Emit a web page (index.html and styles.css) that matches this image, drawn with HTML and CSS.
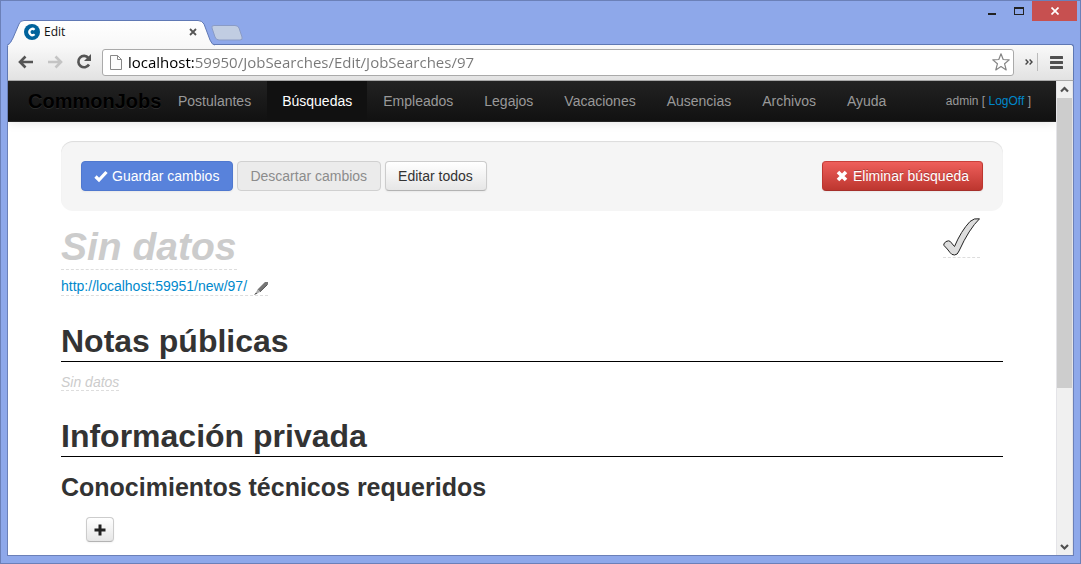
FILE: index.html
```html
<!DOCTYPE html>
<html lang="es">
<head>
<meta charset="utf-8">
<title>Edit</title>
<link rel="stylesheet" href="styles.css">
</head>
<body>
<div class="window">
  <header class="titlebar">
    <div class="tab">
      <svg class="tab-shape" width="208" height="26" viewBox="0 0 208 26" aria-hidden="true">
        <defs><linearGradient id="tabFill" x1="0" y1="0" x2="0" y2="1"><stop offset="0" stop-color="#fff"/><stop offset="1" stop-color="#f8f8f8"/></linearGradient></defs>
        <path d="M0 26 Q4 24 6 18 L12 4 Q13 .5 17 .5 H191 Q195 .5 197 4 L203 20 Q205 25 208 25 V26 Z" fill="url(#tabFill)"/>
        <path d="M0 25.5 Q4 23 6 18 L12 4 Q13 .5 17 .5 H191 Q195 .5 197 4 L203 20 Q205 25 208 25" fill="none" stroke="#6079b5"/>
      </svg>
      <svg class="favicon" width="16" height="16" viewBox="0 0 16 16" aria-hidden="true">
        <circle cx="8" cy="8" r="8" fill="#00639c"/>
        <path d="M10.6 5.7 A3.1 3.1 0 1 0 10.6 10.3" fill="none" stroke="#fff" stroke-width="2.2"/>
      </svg>
      <span class="tab-title">Edit</span>
      <button class="tab-close" aria-label="Cerrar pestaña"><svg width="8" height="8" viewBox="0 0 8 8"><path d="M1 1 L7 7 M7 1 L1 7" stroke="#555" stroke-width="1.8"/></svg></button>
    </div>
    <button class="new-tab" aria-label="Nueva pestaña"><svg width="32" height="16" viewBox="0 0 32 16"><path d="M3 .5 H24 Q27 .5 28 3 L31 12 Q32 15 29 15 H8 Q5 15 4 12 L1 3 Q0 .5 3 .5Z" fill="#c1cde2" stroke="#8a9bc6"/></svg></button>
    <div class="window-controls">
      <button class="win-button" aria-label="Minimizar"><svg width="8" height="12" viewBox="0 0 8 12"><path d="M0 9 H8" stroke="#222" stroke-width="2"/></svg></button>
      <button class="win-button" aria-label="Maximizar"><svg width="10" height="8" viewBox="0 0 10 8"><path d="M.5 0 V8 M9.500 0 V8 M0 7.500 H10" stroke="#222"/><path d="M0 1 H10" stroke="#222" stroke-width="2"/></svg></button>
      <button class="win-button win-close" aria-label="Cerrar"><svg width="8" height="8" viewBox="0 0 8 8"><path d="M.5 .5 L7.500 7.500 M7.500 .5 L.5 7.500" stroke="#fff" stroke-width="1.7"/></svg></button>
    </div>
  </header>

  <div class="toolbar">
    <button class="tool" aria-label="Atrás"><svg width="16" height="14" viewBox="0 0 16 14"><path d="M15 7 H3 M7.500 1.500 L2 7 L7.500 12.500" fill="none" stroke="#555" stroke-width="2.600"/></svg></button>
    <button class="tool" aria-label="Adelante"><svg width="16" height="14" viewBox="0 0 16 14"><path d="M1 7 H13 M8.500 1.500 L14 7 L8.500 12.500" fill="none" stroke="#c4c4c4" stroke-width="2.600"/></svg></button>
    <button class="tool" aria-label="Recargar"><svg width="16" height="16" viewBox="0 0 16 16"><path d="M12.500 4 A5.700 5.700 0 1 0 13 10.500" fill="none" stroke="#555" stroke-width="2.600"/><path d="M15 0 V7 H8Z" fill="#555"/></svg></button>
    <form class="address">
      <svg width="12" height="15" viewBox="0 0 12 15" aria-hidden="true"><path d="M.5 .5 H7.500 L11.500 4.500 V14.500 H.5Z M7.500 .5 V4.500 H11.500" fill="#fcfcfc" stroke="#888"/></svg>
      <input class="address-input" type="text" aria-label="Dirección" value="localhost:59950/JobSearches/Edit/JobSearches/97">
      <button class="star" type="button" aria-label="Marcador"><svg width="18" height="18" viewBox="0 0 18 18"><path d="M9 .8 L11.200 6.500 L17.200 6.900 L12.600 10.800 L14.200 16.900 L9 13.500 L3.800 16.900 L5.400 10.800 L.8 6.900 L6.800 6.500Z" fill="#fff" stroke="#858585" stroke-width="1.200" stroke-linejoin="round"/></svg></button>
    </form>
    <button class="overflow" aria-label="Más extensiones"><svg width="8" height="6" viewBox="0 0 8 6"><path d="M.6 .5 L3 3 L.6 5.500 M4.600 .5 L7 3 L4.600 5.500" fill="none" stroke="#444" stroke-width="1.400"/></svg></button>
    <button class="menu" aria-label="Menú"><svg width="13" height="13" viewBox="0 0 13 13"><path d="M1 1.500 H12 M1 6.500 H12 M1 11.500 H12" stroke="#505050" stroke-width="3" stroke-linecap="round"/></svg></button>
  </div>

  <div class="viewport">
    <div class="page">
      <nav class="navbar">
        <a class="brand" href="#">CommonJobs</a>
        <ul class="nav">
          <li><a href="#">Postulantes</a></li>
          <li><a class="active" href="#">Búsquedas</a></li>
          <li><a href="#">Empleados</a></li>
          <li><a href="#">Legajos</a></li>
          <li><a href="#">Vacaciones</a></li>
          <li><a href="#">Ausencias</a></li>
          <li><a href="#">Archivos</a></li>
          <li><a href="#">Ayuda</a></li>
        </ul>
        <p class="session">admin [ <a href="#">LogOff</a> ]</p>
      </nav>

      <main class="content">
        <div class="actions">
          <button class="btn btn-primary"><svg width="14" height="14" viewBox="0 0 14 14" aria-hidden="true"><path d="M1.500 7.500 L5 11 L12.500 3" fill="none" stroke="#fff" stroke-width="3.200"/></svg>Guardar cambios</button>
          <button class="btn btn-disabled" disabled>Descartar cambios</button>
          <button class="btn">Editar todos</button>
          <button class="btn btn-danger"><svg width="14" height="14" viewBox="0 0 14 14" aria-hidden="true"><path d="M3 3 L11 11 M11 3 L3 11" stroke="#fff" stroke-width="3.600"/></svg>Eliminar búsqueda</button>
        </div>

        <div class="heading">
          <h1><span class="editable">Sin datos</span></h1>
          <button class="approve" aria-label="Publicada"><svg width="37" height="38" viewBox="0 0 37 38"><path d="M.8 26 Q2.500 22.800 5.500 22.800 Q7.500 23 8.500 25 L11.500 28.500 Q18 13 27 3.500 Q31 -.2 36.500 .8 Q26 11 16 33 Q14.500 37 11.500 37 Q8.500 37 7 34.500 Q4.500 31 1 27.500 Z" fill="#ddd" stroke="#222" stroke-linejoin="round"/></svg></button>
        </div>
        <div class="public-link editable">
          <a href="#">http://localhost:59951/new/97/</a>
          <svg width="14" height="14" viewBox="0 0 14 14" aria-hidden="true"><path d="M11 1 H14 V3 L6 11 L3.500 8.500Z" fill="#777"/><path d="M3.500 8.500 L6 11 L3 12.500 L1.500 12.500Z" fill="#aaa"/><path d="M1.800 11.800 L0 14 L3.500 12.500Z" fill="#444"/><path d="M13.500 3.500 L6 10.800" stroke="#555"/></svg>
        </div>

        <h2>Notas públicas</h2>
        <p class="notes"><span class="editable">Sin datos</span></p>

        <h2>Información privada</h2>
        <h3>Conocimientos técnicos requeridos</h3>
        <button class="btn btn-add" aria-label="Agregar"><svg width="12" height="12" viewBox="0 0 12 12"><path d="M6 .5 V11.500 M.5 6 H11.500" stroke="#222" stroke-width="3"/></svg></button>
      </main>
    </div>
    <div class="scrollbar" aria-hidden="true">
      <svg width="9" height="17" viewBox="0 0 9 17"><path d="M1 10.500 L4.500 7 L8 10.500" fill="none" stroke="#505050" stroke-width="2.200"/></svg>
      <div class="thumb"></div>
      <svg width="9" height="17" viewBox="0 0 9 17"><path d="M1 7 L4.500 10.500 L8 7" fill="none" stroke="#505050" stroke-width="2.200"/></svg>
    </div>
  </div>
</div>
</body>
</html>
```
FILE: styles.css
```css
* { box-sizing: border-box; }

body {
  margin: 0;
  font: 14px/20px "Liberation Sans", Arial, sans-serif;
  color: #333;
}

button {
  margin: 0;
  padding: 0;
  border: 0;
  background: none;
  font: inherit;
}

svg { display: block; flex: none; }
a { color: #08c; text-decoration: none; }

.window {
  display: flex;
  flex-direction: column;
  height: 100vh;
  padding: 0 6px 7px;
  background: #8ea8ea;
  border: 1px solid #6b80b8;
}

/* Title bar */
.titlebar {
  display: flex;
  align-items: flex-end;
  height: 43px;
  flex: none;
}
.tab {
  position: relative;
  z-index: 1;
  display: flex;
  align-items: center;
  width: 204px;
  height: 24px;
  padding: 0 14px 0 17px;
  font: 12px/16px "Open Sans", "Noto Sans", sans-serif;
  color: #111;
}
.tab-shape { position: absolute; left: 0; top: 0; }
.favicon, .tab-title, .tab-close { position: relative; }
.tab-title { flex: 1; margin-left: 4px; }
.new-tab { margin: 0 0 3px; }
.window-controls {
  display: flex;
  align-self: flex-start;
  margin-left: auto;
  margin-right: -3px;
}
.win-button {
  display: flex;
  align-items: center;
  justify-content: center;
  width: 27px;
  height: 20px;
}
.win-close { width: 45px; background: #c75050; }

/* Toolbar */
.toolbar {
  display: flex;
  align-items: center;
  flex: none;
  height: 37px;
  padding: 0 10px 1px;
  background: linear-gradient(#f9f9f9, #e2e2e2);
  border: 1px solid #5f78b3;
  border-bottom-color: #a9a9a9;
  border-radius: 3px 3px 0 0;
}
.tool { margin-right: 13px; }
.address {
  display: flex;
  align-items: center;
  flex: 1;
  height: 27px;
  margin: 0 11px 0 -3px;
  padding: 0 3px 0 7px;
  background: #fff;
  border: 1px solid #aaa;
  border-radius: 3px;
}
.address-input {
  flex: 1;
  min-width: 0;
  margin-left: 6px;
  padding: 0;
  border: 0;
  font: 15px/22px "Open Sans", "Noto Sans", sans-serif;
  color: transparent;
  background: linear-gradient(to right, #000 67px, #777 67px);
  -webkit-background-clip: text;
  background-clip: text;
}
.overflow {
  height: 18px;
  padding-right: 4px;
  border-right: 1px solid #bbb;
}
.menu { margin-left: 12px; }

/* Page viewport */
.viewport {
  display: flex;
  flex: 1;
  min-height: 0;
  background: #fff;
  border: 1px solid #6b80b8;
  border-top: 0;
}
.page { flex: 1; min-width: 0; overflow: hidden; }

.navbar {
  display: flex;
  align-items: center;
  height: 41px;
  padding: 0 25px 0 20px;
  background: linear-gradient(#222, #111);
  border-bottom: 1px solid #252525;
  box-shadow: 0 1px 10px rgba(0, 0, 0, .1);
}
.brand {
  width: 135px;
  font-size: 20px;
  font-weight: bold;
  color: #000;
  text-shadow: 0 1px 0 rgba(255, 255, 255, .1);
}
.nav {
  display: flex;
  gap: 1px;
  margin: 0;
  padding: 0;
  list-style: none;
}
.nav a {
  display: block;
  padding: 10px 15px;
  color: #999;
}
.nav .active { color: #fff; background: #111; }
.session {
  margin: 0 0 0 auto;
  font-size: 12px;
  color: #999;
}

.content { padding: 19px 53px; }
.actions {
  display: flex;
  gap: 4px;
  padding: 20px;
  background: #f5f5f5;
  border-radius: 12px;
  box-shadow: inset 0 1px 1px rgba(0, 0, 0, .1);
}
.btn {
  display: inline-flex;
  align-items: center;
  gap: 4px;
  height: 30px;
  padding: 0 13px 0 12px;
  color: #333;
  background: linear-gradient(#fff, #e6e6e6);
  border: 1px solid #ccc;
  border-bottom-color: #b3b3b3;
  border-radius: 4px;
  box-shadow: 0 1px 2px rgba(0, 0, 0, .05);
}
.btn-primary { color: #fff; background: #5882db; border-color: #4f78cf; }
.btn-disabled { color: #8c8c8c; background: #ebebeb; border-color: #d0d0d0; box-shadow: none; }
.btn-danger {
  margin-left: auto;
  color: #fff;
  background: linear-gradient(#ee5f5b, #bd362f);
  border-color: #c9403b #bd362f #a52f2a;
  text-shadow: 0 -1px 0 rgba(0, 0, 0, .25);
}
.editable { border-bottom: 1px dashed #ddd; }
.heading {
  display: flex;
  justify-content: space-between;
  align-items: flex-start;
  padding: 7px 23px 0 0;
}
h1, h2, h3 { margin: 0; font-weight: bold; }
h1 { font-size: 39px; line-height: 40px; font-style: italic; }
h1 .editable { display: block; height: 52px; padding-top: 9px; color: #ccc; }
.approve {
  display: flex;
  align-items: flex-start;
  height: 40px;
  border-bottom: 1px dashed #ddd;
}
.public-link {
  display: flex;
  align-items: flex-end;
  gap: 7px;
  width: fit-content;
  height: 19px;
  margin-top: 7px;
}
.public-link a { line-height: 18px; }
h2 {
  margin-top: 25px;
  border-bottom: 1px solid #000;
  font-size: 32px;
  line-height: 40px;
}
.notes { height: 19px; margin: 10px 0 0; font-style: italic; color: #ccc; }
.notes .editable { display: inline-block; height: 19px; }
h3 { margin-top: 10px; font-size: 25px; line-height: 40px; }
.btn-add { height: 25px; margin: 10px 0 0 25px; padding: 0 7px; }

/* Scrollbar */
.scrollbar {
  display: flex;
  flex-direction: column;
  align-items: center;
  width: 17px;
  background: #f0f0f0;
  border: 0 solid #e4e4e8;
  border-width: 0 1px;
}
.thumb { width: 100%; height: 290px; margin-bottom: auto; background: #cdcdcd; }
```
